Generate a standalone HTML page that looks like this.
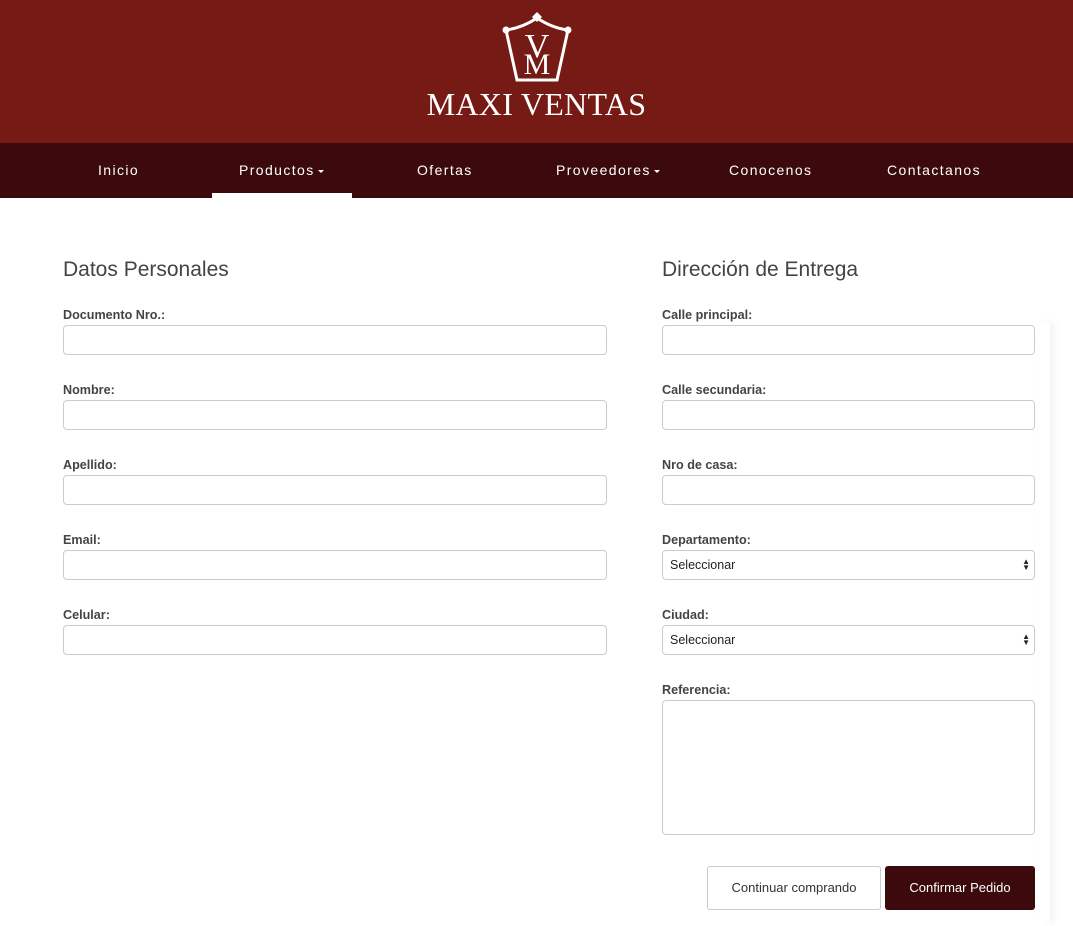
<!DOCTYPE html>
<html><head><meta charset="utf-8"><style>
*{box-sizing:border-box;margin:0;padding:0}
body{width:1073px;height:926px;overflow:hidden;background:#fff;font-family:"Liberation Sans",sans-serif;position:relative}
.hdr{position:absolute;left:0;top:0;width:1073px;height:143px;background:#761a15}
.logo-t{position:absolute;left:0;width:1073px;top:86px;text-align:center;color:#fff;font-family:"Liberation Serif",serif;font-size:32px;letter-spacing:0.3px}
.nav{position:absolute;top:143px;left:0;width:1073px;height:55px;background:#3c0a0c}
.nav span{position:absolute;top:19px;color:#fff;font-size:14px;letter-spacing:1.4px}
.act{position:absolute;left:212px;top:193px;width:140px;height:5px;background:#fff}
.car{display:inline-block;border-left:3px solid transparent;border-right:3px solid transparent;border-top:3px solid #fff;vertical-align:middle;margin-left:3px}
h2{position:absolute;font-weight:normal;font-size:21px;color:#444}
label{position:absolute;font-size:12.6px;font-weight:bold;color:#444}
.in{position:absolute;height:30px;border:1px solid #ccc;border-radius:4px;background:#fff}
.sel{font-size:12.5px;color:#222;padding:7px 7px}
.arr{position:absolute;right:4px;top:8px;font-size:8px;line-height:6px;color:#222}
.btn{position:absolute;top:866px;height:44px;border-radius:3px;font-size:13px;text-align:center;line-height:44px}
.shadow{position:absolute;left:1040px;top:322px;width:10px;height:600px;box-shadow:4px 0 8px rgba(0,0,0,0.05)}
</style></head><body>
<div class="shadow"></div>
<div class="hdr">
<svg style="position:absolute;left:500px;top:10px" width="74" height="72" viewBox="0 0 74 72">
<polygon points="37,2 42,7 37,12 32,7" fill="#fff"/>
<circle cx="6" cy="20" r="3.5" fill="#fff"/><circle cx="68" cy="20" r="3.5" fill="#fff"/>
<path d="M37,8 Q22,18 6,20 L17,70 L57,70 L68,20 Q52,18 37,8" fill="none" stroke="#fff" stroke-width="3"/>
<text x="37" y="47" text-anchor="middle" font-family="Liberation Serif" font-size="34" fill="#fff">V</text>
<text x="37" y="64" text-anchor="middle" font-family="Liberation Serif" font-size="30" fill="#fff">M</text>
</svg>
<div class="logo-t">MAXI VENTAS</div>
</div>
<div class="nav">
<span style="left:98px">Inicio</span>
<span style="left:239px">Productos<i class="car"></i></span>
<span style="left:417px">Ofertas</span>
<span style="left:556px">Proveedores<i class="car"></i></span>
<span style="left:729px">Conocenos</span>
<span style="left:887px">Contactanos</span>
</div>
<div class="act"></div>

<h2 style="left:63px;top:258px">Datos Personales</h2>
<label style="left:63px;top:308px">Documento Nro.:</label><div class="in" style="left:63px;top:325px;width:544px"></div>
<label style="left:63px;top:383px">Nombre:</label><div class="in" style="left:63px;top:400px;width:544px"></div>
<label style="left:63px;top:458px">Apellido:</label><div class="in" style="left:63px;top:475px;width:544px"></div>
<label style="left:63px;top:533px">Email:</label><div class="in" style="left:63px;top:550px;width:544px"></div>
<label style="left:63px;top:608px">Celular:</label><div class="in" style="left:63px;top:625px;width:544px"></div>

<h2 style="left:662px;top:258px">Dirección de Entrega</h2>
<label style="left:662px;top:308px">Calle principal:</label><div class="in" style="left:662px;top:325px;width:373px"></div>
<label style="left:662px;top:383px">Calle secundaria:</label><div class="in" style="left:662px;top:400px;width:373px"></div>
<label style="left:662px;top:458px">Nro de casa:</label><div class="in" style="left:662px;top:475px;width:373px"></div>
<label style="left:662px;top:533px">Departamento:</label><div class="in sel" style="left:662px;top:550px;width:373px">Seleccionar<div class="arr">▲<br>▼</div></div>
<label style="left:662px;top:608px">Ciudad:</label><div class="in sel" style="left:662px;top:625px;width:373px">Seleccionar<div class="arr">▲<br>▼</div></div>
<label style="left:662px;top:683px">Referencia:</label><div class="in" style="left:662px;top:700px;width:373px;height:135px"></div>

<div class="btn" style="left:707px;width:174px;border:1px solid #ccc;color:#333;background:#fff;line-height:42px">Continuar comprando</div>
<div class="btn" style="left:885px;width:150px;background:#3c0a0c;color:#fff">Confirmar Pedido</div>
</body></html>
